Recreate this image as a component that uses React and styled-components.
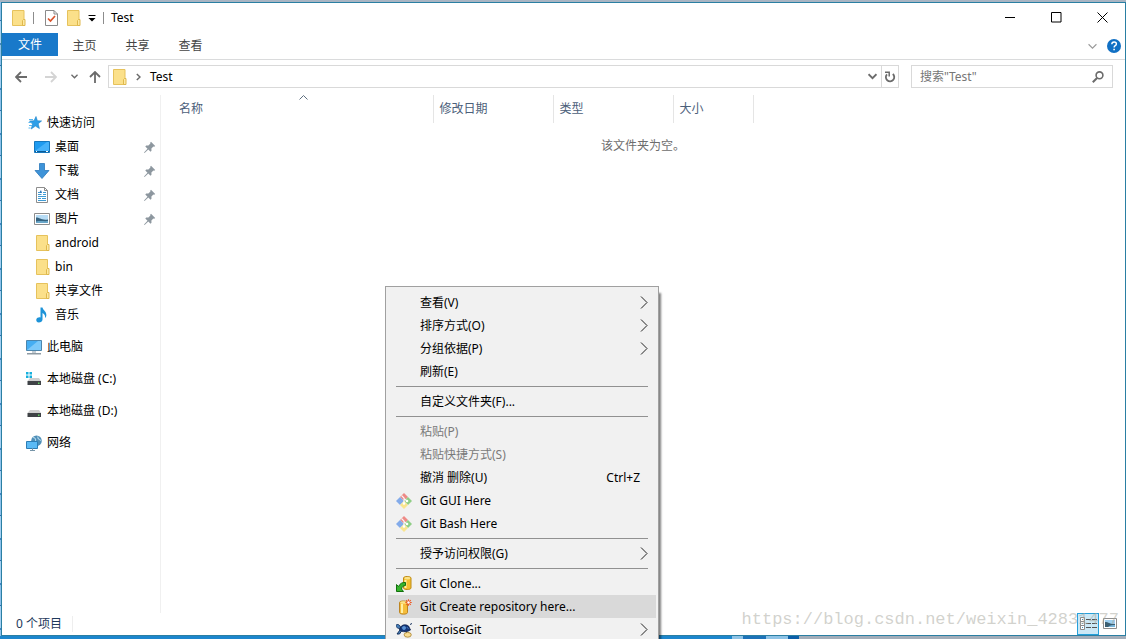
import React, { useState } from 'react';
import styled, { createGlobalStyle } from 'styled-components';

const GlobalStyle = createGlobalStyle`
    * {
        box-sizing: border-box;
    }

    body {
        margin: 0;
        font-family: "Noto Sans", "Noto Sans CJK SC", sans-serif;
        font-size: 12px;
        line-height: 16px;
        color: #000;
    }

    button, input {
        font: inherit;
        color: inherit;
        border: none;
        background: none;
        padding: 0;
        margin: 0;
    }

    svg {
        display: block;
        flex-shrink: 0;
    }
`;

const Desktop = styled.div`
    position: relative;
    height: 100vh;
    overflow: hidden;
    padding: 2px 0 3px 1px;
    background:
        linear-gradient(90deg, #1c86cd 0 65%, #8ec3e6 65% 66%, #1c72b8 66% 68%, #8ec3e6 68% 70%, #0b5ea8 70% 71%, #a3adb9 71%) bottom / 100% 3px no-repeat,
        linear-gradient(#a9b5c3, #a9b5c3) top / 100% 2px no-repeat,
        repeating-linear-gradient(#8cc0ea 0 20px, #2f6fae 20px 21px, #a5d0f2 21px 43px, #4186c4 43px 45px);
`;

const Window = styled.div`
    height: 100%;
    display: flex;
    flex-direction: column;
    background-color: #fff;
    border: 1px solid #2a7fa3;
`;

const TitleBar = styled.header`
    height: 30px;
    display: flex;
    align-items: center;
    padding-left: 10px;
    flex-shrink: 0;
`;

const Divider = styled.span`
    width: 1px;
    height: 12px;
    background-color: #8c8c8c;
`;

const QuickTools = styled.div`
    display: flex;
    align-items: center;
    gap: 7px;
    margin-right: 7px;

    .properties {
        padding: 0 2px 0 4px;
    }
`;

const Title = styled.h1`
    flex: 1;
    margin: 0;
    font-size: 12px;
    font-weight: 400;
`;

const WindowButton = styled.button`
    width: 46px;
    height: 28px;
    align-self: flex-start;
    display: flex;
    align-items: center;
    justify-content: center;

    &:hover {
        background-color: #e5e5e5;
    }
`;

const Ribbon = styled.nav`
    height: 27px;
    display: flex;
    align-items: flex-start;
    border-bottom: 1px solid #dadbdc;
    flex-shrink: 0;
`;

const Tab = styled.button`
    width: ${props => props.$file ? '56px' : '53px'};
    height: ${props => props.$file ? '23px' : '25px'};
    color: ${props => props.$file ? '#fff' : '#444'};
    background-color: ${props => props.$file ? '#1979ca' : 'transparent'};
`;

const RibbonEnd = styled.div`
    margin-left: auto;
    height: 26px;
    display: flex;
    align-items: center;
    gap: 10px;
    padding-right: 4px;
`;

const NavRow = styled.div`
    display: flex;
    align-items: center;
    padding: 5px 12px 5px 13px;
    flex-shrink: 0;
`;

const NavButtons = styled.div`
    display: flex;
    align-items: center;
`;

const NavButton = styled.button`
    width: ${props => props.$width};
    height: 23px;
    display: flex;
    align-items: center;
    color: ${props => props.disabled ? '#d4d4d4' : '#6b6b6b'};
`;

const AddressBar = styled.div`
    flex: 1;
    height: 23px;
    display: flex;
    align-items: center;
    gap: 9px;
    padding-left: 4px;
    border: 1px solid #d9d9d9;
`;

const AddressEnd = styled.div`
    height: 21px;
    margin-left: auto;
    display: flex;

    button {
        width: 17px;
        display: flex;
        align-items: center;
        justify-content: center;
        color: #6b6b6b;
    }

    button + button {
        border-left: 1px solid #d9d9d9;
    }
`;

const SearchBox = styled.label`
    width: 202px;
    height: 23px;
    display: flex;
    align-items: center;
    margin-left: 12px;
    padding: 0 8px;
    border: 1px solid #d9d9d9;

    input {
        flex: 1;
        min-width: 0;
        outline: none;
    }

    input::placeholder {
        color: #767676;
        opacity: 1;
    }
`;

const Body = styled.div`
    flex: 1;
    min-height: 0;
    display: flex;
    padding-top: 2px;
`;

const Sidebar = styled.ul`
    width: 159px;
    margin: 0;
    padding: 16px 4px 0 0;
    list-style: none;
    border-right: 1px solid #f0f0f0;
    flex-shrink: 0;
`;

const SideItem = styled.li`
    margin-top: ${props => props.$spaced ? '8px' : '0'};
`;

const SideLink = styled.a`
    height: 24px;
    display: flex;
    align-items: center;
    gap: 5px;
    padding-left: ${props => props.$root ? '24px' : '32px'};
    color: #000;
    text-decoration: none;

    .pin {
        margin-left: auto;
    }
`;

const FileTable = styled.table`
    flex: 1;
    align-self: flex-start;
    width: 100%;
    table-layout: fixed;
    border-collapse: collapse;
`;

const HeadCell = styled.th`
    position: relative;
    width: ${props => props.$width};
    height: 28px;
    padding: 0 0 0 ${props => props.$first ? '18px' : '6px'};
    text-align: left;
    font-weight: 400;
    color: #4c607a;
    border-right: ${props => props.$width ? '1px solid #e5e5e5' : 'none'};

    svg {
        position: absolute;
        top: 0;
        left: 51%;
    }
`;

const EmptyCell = styled.td`
    padding: 15px 0;
    text-align: center;
    color: #6d6d6d;
`;

const StatusBar = styled.footer`
    height: 22px;
    display: flex;
    align-items: center;
    padding: 0 4px 0 14px;
    color: #1e395b;
    flex-shrink: 0;
`;

const StatusText = styled.span`
    padding-right: 10px;
    border-right: 1px solid #eee;
    margin-right: auto;
`;

const ViewButton = styled.button`
    width: 22px;
    height: 22px;
    display: flex;
    align-items: center;
    justify-content: center;
    background-color: ${props => props.$active ? '#cbe8f6' : 'transparent'};
    border: 1px solid ${props => props.$active ? '#26a0da' : 'transparent'};
`;

const Watermark = styled.span`
    position: absolute;
    right: 7px;
    bottom: 9px;
    font-family: "Liberation Mono", monospace;
    font-size: 17px;
    line-height: 20px;
    color: rgba(165, 165, 155, 0.5);
    pointer-events: none;
`;

const Menu = styled.div`
    position: absolute;
    left: 385px;
    top: 286px;
    width: 274px;
    padding: 4px 2px;
    background-color: #f1f1f1;
    border: 1px solid #a0a0a0;
    box-shadow: 3px 6px 2px -1px rgba(0, 0, 0, 0.5);
`;

const MenuItem = styled.button`
    width: 100%;
    height: 23px;
    display: grid;
    grid-template-columns: 16px 1fr auto 8px;
    align-items: center;
    padding: 0 8px;
    text-align: left;
    color: ${props => props.disabled ? '#7a7a7a' : '#000'};
    background-color: ${props => props.$active ? '#d9d9d9' : 'transparent'};
`;

const MenuLabel = styled.span`
    padding-left: 8px;
    white-space: nowrap;
`;

const MenuLine = styled.hr`
    height: 1px;
    margin: 3px 8px;
    border: none;
    background-color: #919191;
`;

const FolderIcon = () => (
    <svg width='14' height='16' viewBox='0 0 14 16'>
        <path d='M.5.5h11.5v15H.5z' fill='#fbe08a' stroke='#e6c25c' />
        <path d='M10.5 10.5l1-1h1.5v6h-2.5z' fill='#fde9a3' stroke='#dfb84c' />
    </svg>
);

const Chevron = ({ size = 8, color = '#6b6b6b', weight = 1.6 }) => (
    <svg width={size} height={size} viewBox='0 0 8 8' fill='none' stroke={color} strokeWidth={weight}>
        <path d='M.5 2l3.5 3.5L7.5 2' />
    </svg>
);

const CheckDocIcon = () => (
    <svg width='13' height='16' viewBox='0 0 13 16' fill='none'>
        <path d='M.5.5h8.5l3.5 3.5v11.5H.5z' fill='#fff' stroke='#8a8a8a' />
        <path d='M9 .5V4h3.5' stroke='#8a8a8a' />
        <path d='M3 8.5l2.500 2.500 4.500-5' stroke='#d9532c' strokeWidth='1.700' />
    </svg>
);

const CustomizeIcon = () => (
    <svg width='8' height='8' viewBox='0 0 8 8'>
        <path d='M.5 1h7v1h-7zM.5 4h7L4 7.500z' fill='#000' />
    </svg>
);

const ArrowIcon = ({ turn = 0 }) => (
    <svg width='12' height='12' viewBox='0 0 12 12' fill='none' stroke='currentColor' strokeWidth='1.800'>
        <path d='M12 6H1.500M6 1L1 6l5 5' transform={`rotate(${turn} 6 6)`} />
    </svg>
);

const RefreshIcon = () => (
    <svg width='12' height='12' viewBox='0 0 12 12' fill='none' stroke='currentColor'>
        <path d='M3 3.300A4.200 4.200 0 1 0 8.800 3' strokeWidth='1.800' />
        <path d='M1 1.200h4.200v4.200' strokeWidth='1.500' />
    </svg>
);

const SearchIcon = () => (
    <svg width='12' height='12' viewBox='0 0 12 12' fill='none' stroke='#6b6b6b'>
        <circle cx='7.500' cy='4.300' r='3.400' strokeWidth='1.600' />
        <path d='M5 7L.8 11.200' strokeWidth='2' />
    </svg>
);

const HelpIcon = () => (
    <svg width='14' height='14' viewBox='0 0 14 14'>
        <circle cx='7' cy='7' r='7' fill='#1170c4' />
        <path d='M4.800 5.200c0-3 4.600-2.800 4.600-.2 0 1.700-2.300 1.600-2.300 3.400' fill='none' stroke='#fff' strokeWidth='1.400' />
        <path d='M6.300 9.700h1.600v1.500H6.300z' fill='#fff' />
    </svg>
);

const SortIcon = () => (
    <svg width='9' height='5' viewBox='0 0 9 5' fill='none' stroke='#5f6f80'>
        <path d='M.5 4.500l4-4 4 4' />
    </svg>
);

const PinIcon = () => (
    <svg className='pin' width='12' height='12' viewBox='0 0 12 12'>
        <path d='M7 .8L11.200 5l-1 .8-.8-.2-2 2 .1 2.200-1 .9-2.200-2.200L.6 12 0 11.400 3.500 7.700 1.300 5.500l.9-1 2.200.1 2-2-.2-.8z' fill='#8d979f' />
    </svg>
);

const StarIcon = () => (
    <svg width='16' height='16' viewBox='0 0 16 16'>
        <path d='M10 1.500l1.400 4.300 4.200.1-3.400 2.800 1.200 4.800-4-2.400-4.200 2.900 1.400-4.900L3.500 6l4.500-.2z' fill='#2f9fe8' stroke='#1e83c8' strokeWidth='.6' />
        <path d='M3 4.500h4M2.500 7.500h3M3 10.500h3M2.500 13h2' stroke='#58b8f0' />
    </svg>
);

const DesktopIcon = () => (
    <svg width='16' height='16' viewBox='0 0 16 16'>
        <path d='M.5 2.500h15v11H.5z' fill='#1f9bf0' stroke='#1677bd' />
        <path d='M1 12L13 3h2v9z' fill='#46b2fa' />
        <path d='M1 12.500h14' stroke='#0b5b96' />
        <path d='M2 12.500h1M12 12.500h2' stroke='#fff' />
    </svg>
);

const DownloadIcon = () => (
    <svg width='16' height='16' viewBox='0 0 16 16'>
        <path d='M5.500.5h5v7h4.500L8 15.500 1 7.500h4.500z' fill='#3e93d8' stroke='#2b78bb' strokeWidth='.8' />
    </svg>
);

const DocumentIcon = () => (
    <svg width='16' height='16' viewBox='0 0 16 16' fill='none'>
        <path d='M2.500.5h8l3 3v12h-11z' fill='#fff' stroke='#8d8d8d' />
        <path d='M10.500.5v3h3' stroke='#8d8d8d' />
        <path d='M4 5.500h1.500M9 5.500h3M4 7.500h3.500M9 7.500h3M4 9.500h8M4 11.500h3M8 11.500h4M4 13.500h8' stroke='#3f9bd4' />
        <path d='M5 6l2-3 1 3z' fill='#2b78bb' />
    </svg>
);

const PictureIcon = () => (
    <svg width='16' height='16' viewBox='0 0 16 16'>
        <path d='M.5 2.500h15v11H.5z' fill='#fff' stroke='#8d8d8d' />
        <path d='M2 4h12v8H2z' fill='#b7dcf5' />
        <path d='M2 6.500c4 0 5 3 12 2V12H2z' fill='#35627f' />
        <path d='M2 10.500c5-1 8 0 12-.5v2H2z' fill='#6aa7c9' />
    </svg>
);

const MusicIcon = () => (
    <svg width='16' height='16' viewBox='0 0 16 16'>
        <path d='M6.500.5h2c.5 3 4.500 4 3.800 8.500-.4 1-.8 1.500-1.300 2 .5-3-1-4.300-2.500-5v6.500c0 2-1.800 3-3.700 3S2 14 2.300 12.500C2.700 10.700 5 10 6.500 10.500z' fill='#1d93d8' />
    </svg>
);

const ComputerIcon = () => (
    <svg width='16' height='16' viewBox='0 0 16 16'>
        <path d='M.5 1.500h15v10H.5z' fill='#45aef3' stroke='#4d86ad' />
        <path d='M1 11L12 2h3v9z' fill='#7cc9fa' />
        <path d='M6 12h4v2H6z' fill='#c3ccd3' />
        <path d='M1 14h14v1.500H1z' fill='#8e9aa3' />
    </svg>
);

const DiskIcon = ({ system }) => (
    <svg width='16' height='16' viewBox='0 0 16 16'>
        {system && <path d='M0 1h2.500v2.500H0zM3.500 1H6v2.500H3.500zM0 4.500h2.500V7H0zM3.500 4.500H6V7H3.500z' fill='#16b0dd' />}
        <path d='M4 7h9l2 3H1.500z' fill='#cfcfcf' />
        <path d='M1.500 10H15v4H1.500z' fill='#3f4246' />
        <path d='M12 11.500h1.500V13H12z' fill='#5fd35f' />
    </svg>
);

const NetworkIcon = () => (
    <svg width='16' height='16' viewBox='0 0 16 16'>
        <circle cx='10.500' cy='5.700' r='5.300' fill='#4f8fb8' />
        <path d='M7 2.500c2 0 3 1.500 2.500 3.500M12 1.500c-1 2 1 3 3 4' fill='none' stroke='#b3d8ec' strokeWidth='1.100' />
        <path d='M.5 6.500h11v7H.5z' fill='#5bbaf5' stroke='#2c7db5' />
        <path d='M4 15.500h5M6.500 13v2' stroke='#7795a8' />
    </svg>
);

const GitIcon = () => (
    <svg width='16' height='16' viewBox='0 0 16 16'>
        <path d='M8 0l4 4-4 4-4-4z' fill='#ee8a86' />
        <path d='M4 4l4 4-4 4-4-4z' fill='#83abea' />
        <path d='M12 4l4 4-4 4-4-4z' fill='#8fce85' />
        <path d='M8 8l4 4-4 4-4-4z' fill='#f9e58f' />
        <path d='M5.500 2.500L8 5v6M8 5.500l3 2.500' fill='none' stroke='#f6f6f6' strokeWidth='1.100' />
        <circle cx='8' cy='10.500' r='1.300' fill='#fff' />
        <circle cx='11' cy='8' r='1.300' fill='#fff' />
    </svg>
);

const CloneIcon = () => (
    <svg width='16' height='16' viewBox='0 0 16 16'>
        <path d='M7.500 2c0-2 7.500-2 7.500 0v10c0 2-7.500 2-7.500 0z' fill='#f3bf2e' stroke='#bd8a17' />
        <path d='M9.500 4v8' stroke='#fff0a5' strokeWidth='2' />
        <ellipse cx='11.300' cy='2.200' rx='3' ry='1.200' fill='#fbe48c' />
        <path d='M.5 8.500l2 2C4 7.500 6.500 6 9.500 6.500v3C7 9.500 6 11 5.500 13l2 2.500h-7z' fill='#37b52c' stroke='#12700d' />
    </svg>
);

const CreateIcon = () => (
    <svg width='16' height='16' viewBox='0 0 16 16'>
        <path d='M3.500 3.500c0-2 8-2 8 0v10c0 2.200-8 2.200-8 0z' fill='#f5bd3a' stroke='#bd8420' />
        <path d='M6 5v9' stroke='#fff0a5' strokeWidth='2' />
        <ellipse cx='7.500' cy='3.500' rx='3.200' ry='1.200' fill='#fbe48c' />
        <path d='M12.500 .3v6.400M9.300 3.500h6.400M10.200 1.200l4.600 4.600M14.800 1.200l-4.600 4.600' stroke='#ee5b28' strokeWidth='1.100' />
        <circle cx='12.500' cy='3.500' r='1.200' fill='#fff' />
    </svg>
);

const TortoiseIcon = () => (
    <svg width='16' height='16' viewBox='0 0 16 16'>
        <path d='M0 3.500C0 2 3 2 4 4l1 3-2-.5C1 6 0 5 0 3.500z' fill='#477fb9' stroke='#14305c' strokeWidth='.8' />
        <path d='M3.500 8C4 3 9 1.500 12.500 4l2 4c-3 2-8 2.500-11 0z' fill='#14367a' stroke='#0b1d45' strokeWidth='.8' />
        <path d='M6 5.500l2-1.500 2 1.500-1 2H7zM11 5l1.500 2' fill='#5b93d4' stroke='#5b93d4' strokeWidth='.6' />
        <path d='M4 8l-3 4h2.500l2-3zM10 9l1 3M14 2.500l2-1' fill='#477fb9' stroke='#14305c' />
        <ellipse cx='11.700' cy='12.800' rx='3.600' ry='2.400' fill='#f7dc93' stroke='#a8802c' strokeWidth='.8' />
    </svg>
);

const SubmenuIcon = () => (
    <svg width='8' height='14' viewBox='0 0 8 14' fill='none' stroke='#222'>
        <path d='M1 .5l6 6-6 6' />
    </svg>
);

const DetailsIcon = () => (
    <svg width='17' height='14' viewBox='0 0 17 14' fill='none'>
        <path d='M.5.500h4v4h-4zM.5 4.500h4v4h-4zM.5 8.500h4v4h-4z' fill='#fff' stroke='#8b8b8b' />
        <path d='M2 2.500h1M2 6.500h1M2 10.500h1' stroke='#3f8fc4' />
        <path d='M6 2.500h5M12 2.500h5M6 6.500h5M12 6.500h5M6 10.500h5M12 10.500h5' stroke='#555' />
    </svg>
);

const ThumbnailIcon = () => (
    <svg width='14' height='12' viewBox='0 0 14 12'>
        <path d='M.5.500h13v10H.5z' fill='#fff' stroke='#8d8d8d' />
        <path d='M2 2h10v7H2z' fill='#9ed0f2' />
        <path d='M2 4c4 0 5 2.500 10 2v3H2z' fill='#3c5f72' />
        <path d='M5 9c2-2 5-2 7-2v2z' fill='#78b6dc' />
    </svg>
);

// folder glyph centred in the 16px slot the other sidebar icons use
const FolderSlot = () => (
    <svg width='16' height='16' viewBox='-2 0 16 16'>
        <path d='M.5.500h11v15H.5z' fill='#fbe08a' stroke='#e6c25c' />
        <path d='M10.500 10.500l1-1h1.500v6h-2.500z' fill='#fde9a3' stroke='#dfb84c' />
    </svg>
);

const sideItems = [
    { name: '快速访问', icon: <StarIcon />, root: true },
    { name: '桌面', icon: <DesktopIcon />, pinned: true },
    { name: '下载', icon: <DownloadIcon />, pinned: true },
    { name: '文档', icon: <DocumentIcon />, pinned: true },
    { name: '图片', icon: <PictureIcon />, pinned: true },
    { name: 'android', icon: <FolderSlot /> },
    { name: 'bin', icon: <FolderSlot /> },
    { name: '共享文件', icon: <FolderSlot /> },
    { name: '音乐', icon: <MusicIcon /> },
    { name: '此电脑', icon: <ComputerIcon />, root: true, spaced: true },
    { name: '本地磁盘 (C:)', icon: <DiskIcon system />, root: true, spaced: true },
    { name: '本地磁盘 (D:)', icon: <DiskIcon />, root: true, spaced: true },
    { name: '网络', icon: <NetworkIcon />, root: true, spaced: true },
];

const menuItems = [
    { label: '查看(V)', submenu: true },
    { label: '排序方式(O)', submenu: true },
    { label: '分组依据(P)', submenu: true },
    { label: '刷新(E)' },
    { line: true },
    { label: '自定义文件夹(F)...' },
    { line: true },
    { label: '粘贴(P)', disabled: true },
    { label: '粘贴快捷方式(S)', disabled: true },
    { label: '撤消 删除(U)', shortcut: 'Ctrl+Z' },
    { label: 'Git GUI Here', icon: <GitIcon /> },
    { label: 'Git Bash Here', icon: <GitIcon /> },
    { line: true },
    { label: '授予访问权限(G)', submenu: true },
    { line: true },
    { label: 'Git Clone...', icon: <CloneIcon /> },
    { label: 'Git Create repository here...', icon: <CreateIcon /> },
    { label: 'TortoiseGit', icon: <TortoiseIcon />, submenu: true },
];

const ContextMenu = () => {
    const [active, setActive] = useState('Git Create repository here...');

    return (
        <Menu role='menu'>
            {menuItems.map((item, i) => item.line
                ? <MenuLine key={i} />
                : (
                    <MenuItem
                        key={i}
                        role='menuitem'
                        disabled={item.disabled}
                        $active={active === item.label}
                        onMouseEnter={() => setActive(item.label)}
                    >
                        <span>{item.icon}</span>
                        <MenuLabel>{item.label}</MenuLabel>
                        <span>{item.shortcut}</span>
                        {item.submenu && <SubmenuIcon />}
                    </MenuItem>
                ))}
        </Menu>
    );
};

const App = () => {
    const [search, setSearch] = useState('');

    return (
        <Desktop>
            <GlobalStyle />
            <Window>
                <TitleBar>
                    <QuickTools>
                        <FolderIcon />
                        <Divider />
                        <button className='properties' aria-label='属性'><CheckDocIcon /></button>
                        <button aria-label='新建文件夹'><FolderIcon /></button>
                        <button aria-label='自定义快速访问工具栏'><CustomizeIcon /></button>
                        <Divider />
                    </QuickTools>
                    <Title>Test</Title>
                    <WindowButton aria-label='最小化'>
                        <svg width='11' height='11' viewBox='0 0 11 11'><path d='M0 5.500h10' stroke='#000' /></svg>
                    </WindowButton>
                    <WindowButton aria-label='最大化'>
                        <svg width='11' height='11' viewBox='0 0 11 11'><path d='M.5.500h9.500v9.500H.5z' fill='none' stroke='#000' /></svg>
                    </WindowButton>
                    <WindowButton aria-label='关闭'>
                        <svg width='11' height='11' viewBox='0 0 11 11'><path d='M.5.500l10 10M10.500.500l-10 10' stroke='#000' /></svg>
                    </WindowButton>
                </TitleBar>
                <Ribbon>
                    <Tab $file>文件</Tab>
                    <Tab>主页</Tab>
                    <Tab>共享</Tab>
                    <Tab>查看</Tab>
                    <RibbonEnd>
                        <button aria-label='展开功能区'><Chevron size={9} color='#9a9a9a' weight={1} /></button>
                        <button aria-label='帮助'><HelpIcon /></button>
                    </RibbonEnd>
                </Ribbon>
                <NavRow>
                    <NavButtons>
                        <NavButton $width='30px' aria-label='后退'><ArrowIcon /></NavButton>
                        <NavButton $width='26px' aria-label='前进' disabled><ArrowIcon turn={180} /></NavButton>
                        <NavButton $width='18px' aria-label='最近'><Chevron size={7} /></NavButton>
                        <NavButton $width='19px' aria-label='向上'><ArrowIcon turn={90} /></NavButton>
                    </NavButtons>
                    <AddressBar>
                        <FolderIcon />
                        <svg width='5' height='8' viewBox='0 0 5 8' fill='none' stroke='#6b6b6b' strokeWidth='1.500'>
                            <path d='M.8 1L4 4 .8 7' />
                        </svg>
                        <button>Test</button>
                        <AddressEnd>
                            <button aria-label='以前的位置'><Chevron size={9} /></button>
                            <button aria-label='刷新'><RefreshIcon /></button>
                        </AddressEnd>
                    </AddressBar>
                    <SearchBox>
                        <input
                            aria-label='搜索'
                            placeholder='搜索"Test"'
                            value={search}
                            onChange={e => setSearch(e.target.value)}
                        />
                        <SearchIcon />
                    </SearchBox>
                </NavRow>
                <Body>
                    <Sidebar>
                        {sideItems.map(item => (
                            <SideItem key={item.name} $spaced={item.spaced}>
                                <SideLink href='#' $root={item.root}>
                                    {item.icon}
                                    {item.name}
                                    {item.pinned && <PinIcon />}
                                </SideLink>
                            </SideItem>
                        ))}
                    </Sidebar>
                    <FileTable>
                        <thead>
                            <tr>
                                <HeadCell $first $width='272px'>名称<SortIcon /></HeadCell>
                                <HeadCell $width='120px'>修改日期</HeadCell>
                                <HeadCell $width='120px'>类型</HeadCell>
                                <HeadCell $width='80px'>大小</HeadCell>
                                <HeadCell />
                            </tr>
                        </thead>
                        <tbody>
                            <tr>
                                <EmptyCell colSpan={5}>该文件夹为空。</EmptyCell>
                            </tr>
                        </tbody>
                    </FileTable>
                </Body>
                <StatusBar>
                    <StatusText>0 个项目</StatusText>
                    <ViewButton $active aria-label='详细信息'><DetailsIcon /></ViewButton>
                    <ViewButton aria-label='大图标'><ThumbnailIcon /></ViewButton>
                </StatusBar>
            </Window>
            <Watermark>https://blog.csdn.net/weixin_42831477</Watermark>
            <ContextMenu />
        </Desktop>
    );
};

export default App;
